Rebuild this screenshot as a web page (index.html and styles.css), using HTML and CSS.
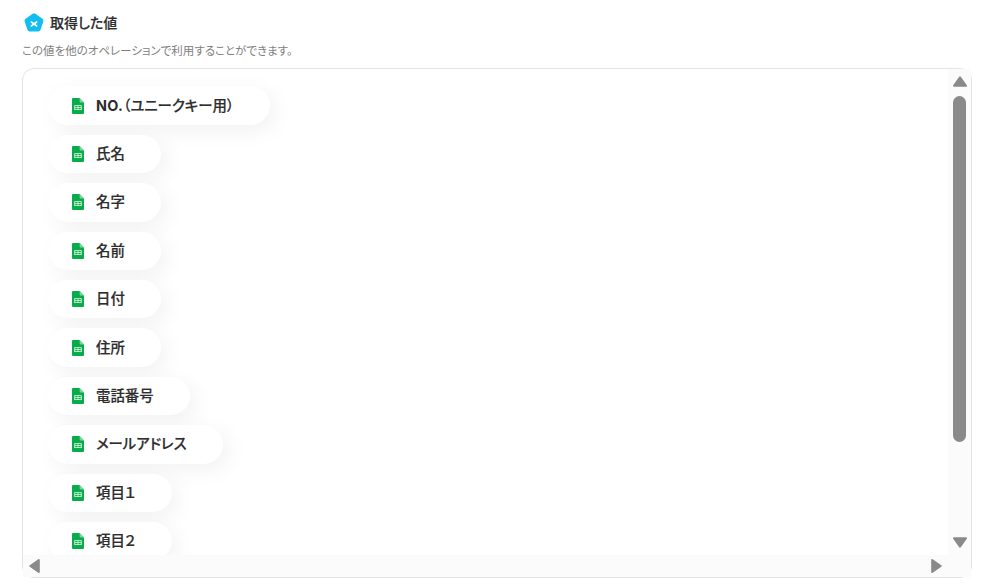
FILE: index.html
```html
<!DOCTYPE html>
<html lang="ja">
<head>
  <meta charset="UTF-8" />
  <title>取得した値</title>
  <link rel="stylesheet" href="styles.css">
</head>
<body>
  <svg class="defs" width="0" height="0">
    <symbol id="sheet" viewBox="0 0 12 16">
      <path d="M1 0H7.6L12 4.4V15a1 1 0 0 1-1 1H1a1 1 0 0 1-1-1V1a1 1 0 0 1 1-1Z" fill="#08ac4a"/>
      <path d="M7.6 0L12 4.4H8.4a.8.8 0 0 1-.8-.8Z" fill="#7fd3a0"/>
      <path d="M2.3 7.2H9.700V12H2.300ZM3.200 8V9.200H5.600V8ZM6.400 8V9.200H8.800V8ZM3.200 10V11.200H5.600V10ZM6.400 10V11.200H8.800V10Z" fill="#e4f6ea" fill-rule="evenodd"/>
    </symbol>
  </svg>

  <div class="header">
    <svg class="logo" width="20" height="20" viewBox="0 0 20 20">
      <path d="M8.6 .8a2.4 2.4 0 0 1 2.8 0l7 5a2.4 2.4 0 0 1 .9 2.700l-2.700 8.200a2.400 2.400 0 0 1-2.300 1.700H5.700a2.400 2.400 0 0 1-2.300-1.700L.7 8.500a2.400 2.400 0 0 1 .9-2.700Z" fill="#14bdf0"/>
      <path d="M7.400 9L12.600 12.900M12.600 9L7.400 12.900" stroke="#fff" stroke-width="1.600" stroke-linecap="round"/>
    </svg>
    <h1 class="title">取得した値</h1>
  </div>
  <p class="note">この値を他のオペレーションで利用することができます。</p>

  <div class="box">
    <div class="list">
      <div class="pill"><svg class="sheet"><use href="#sheet"/></svg><span><b class="latin">NO.</b>（ユニークキー用）</span></div>
      <div class="pill"><svg class="sheet"><use href="#sheet"/></svg>氏名</div>
      <div class="pill"><svg class="sheet"><use href="#sheet"/></svg>名字</div>
      <div class="pill"><svg class="sheet"><use href="#sheet"/></svg>名前</div>
      <div class="pill"><svg class="sheet"><use href="#sheet"/></svg>日付</div>
      <div class="pill"><svg class="sheet"><use href="#sheet"/></svg>住所</div>
      <div class="pill"><svg class="sheet"><use href="#sheet"/></svg>電話番号</div>
      <div class="pill"><svg class="sheet"><use href="#sheet"/></svg>メールアドレス</div>
      <div class="pill"><svg class="sheet"><use href="#sheet"/></svg>項目１</div>
      <div class="pill"><svg class="sheet"><use href="#sheet"/></svg>項目２</div>
    </div>

    <div class="vbar">
      <svg class="arrow" width="14" height="11" viewBox="0 0 14 11"><path d="M7 1.300L13 9.800H1Z" fill="#8a8a8a" stroke="#8a8a8a" stroke-width="2" stroke-linejoin="round"/></svg>
      <div class="thumb"></div>
      <svg class="arrow" width="14" height="11" viewBox="0 0 14 11"><path d="M1 1.200H13L7 9.700Z" fill="#8a8a8a" stroke="#8a8a8a" stroke-width="2" stroke-linejoin="round"/></svg>
    </div>

    <div class="hbar">
      <svg class="arrow" width="11" height="14" viewBox="0 0 11 14"><path d="M9.800 1V13L1.300 7Z" fill="#8a8a8a" stroke="#8a8a8a" stroke-width="2" stroke-linejoin="round"/></svg>
      <svg class="arrow" width="11" height="14" viewBox="0 0 11 14"><path d="M1.200 1V13L9.700 7Z" fill="#8a8a8a" stroke="#8a8a8a" stroke-width="2" stroke-linejoin="round"/></svg>
    </div>
    <div class="corner"></div>
  </div>
</body>
</html>
```

FILE: styles.css
```css
html, body {
  margin: 0;
  padding: 0;
  height: 100%;
  background: #fff;
  overflow: hidden;
  color: #2d2d2d;
  font-family: "Inter", "Noto Sans CJK JP", sans-serif;
  font-feature-settings: "palt";
}

.defs {
  display: block;
  height: 0;
}

.header {
  display: flex;
  align-items: center;
  gap: 6px;
  padding: 13px 0 0 24px;
  height: 20px;
}

.title {
  margin: 0;
  font-size: 14px;
  font-weight: 500;
  line-height: 20px;
  -webkit-text-stroke: 0.2px #2d2d2d;
}

.note {
  margin: 0;
  padding: 11px 0 0 22px;
  font-size: 11.500px;
  line-height: 14px;
  color: #808080;
}

.box {
  display: grid;
  grid-template-columns: 925px 23px;
  grid-template-rows: 486px 22px;
  width: 948px;
  height: 508px;
  margin: 10px 0 0 22px;
  border: 1px solid #e4e4e4;
  border-radius: 12px;
}

.list {
  display: flex;
  flex-direction: column;
  align-items: flex-start;
  gap: 10px;
  padding: 17.400px 0 0 25px;
  overflow: hidden;
}

.pill {
  display: flex;
  flex: none;
  align-items: center;
  gap: 12px;
  height: 38.400px;
  padding: 0 36px 0 24px;
  background: #fff;
  border-radius: 20px;
  box-shadow: 6px 6px 22px rgba(0, 0, 0, 0.055);
  font-size: 14.400px;
  font-weight: 500;
  line-height: 36px;
  -webkit-text-stroke: 0.2px #2d2d2d;
}

.latin {
  font-weight: 700;
  letter-spacing: 0.3px;
  -webkit-text-stroke: 0;
}

.sheet {
  flex: none;
  width: 12px;
  height: 16px;
}

.vbar {
  display: flex;
  flex-direction: column;
  align-items: center;
  padding: 7px 0 0;
  background: #fbfbfb;
  box-sizing: border-box;
  height: 486px;
}

.thumb {
  width: 13px;
  height: 346px;
  margin: 9px 0 95px;
  background: #8a8a8a;
  border-radius: 7px;
}

.arrow {
  display: block;
  flex: none;
}

.hbar {
  display: flex;
  justify-content: space-between;
  align-items: center;
  padding: 0 6px 0 6px;
  background: #fbfbfb;
}

.corner {
  background: #fbfbfb;
}
```
